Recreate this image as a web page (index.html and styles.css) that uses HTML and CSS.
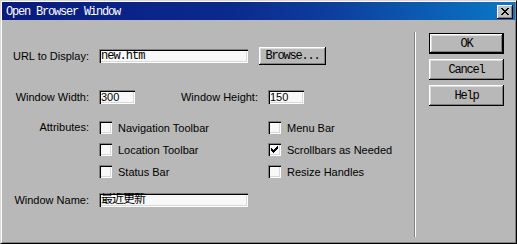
FILE: index.html
```html
<!DOCTYPE html>
<html lang="en">
<head>
    <meta charset="UTF-8">
    <meta name="viewport" content="width=device-width, initial-scale=1.0">
    <title>Open Browser Window</title>
    <link rel="stylesheet" href="styles.css">
</head>
<body>

    <div class="window">
        <div class="titlebar">
            <span class="title">Open Browser Window</span>
            <span class="close-btn">
                <svg width="8" height="7" viewBox="0 0 8 7" shape-rendering="crispEdges">
                    <path d="M0 0h2v1H0zM6 0h2v1H6zM1 1h2v1H1zM5 1h2v1H5zM2 2h4v1H2zM3 3h2v1H3zM2 4h4v1H2zM1 5h2v1H1zM5 5h2v1H5zM0 6h2v1H0zM6 6h2v1H6z" fill="#000"/>
                </svg>
            </span>
        </div>

        <div class="dialog-body">
            <div class="form">
                <div class="row row-url">
                    <span class="label">URL to Display:</span>
                    <div class="field field-long mono">new.htm</div>
                    <button class="btn browse-btn">Browse...</button>
                </div>

                <div class="row row-size">
                    <span class="label">Window Width:</span>
                    <div class="field field-short">300</div>
                    <span class="label label-height">Window Height:</span>
                    <div class="field field-short">150</div>
                </div>

                <div class="row row-attrs">
                    <span class="label">Attributes:</span>
                    <div class="checks">
                        <div class="check"><span class="box"></span>Navigation Toolbar</div>
                        <div class="check"><span class="box"></span>Menu Bar</div>
                        <div class="check"><span class="box"></span>Location Toolbar</div>
                        <div class="check">
                            <span class="box">
                                <svg width="7" height="7" viewBox="0 0 7 7" shape-rendering="crispEdges">
                                    <path d="M6 0h1v1H6zM5 1h2v1H5zM0 2h1v1H0zM4 2h3v1H4zM0 3h2v1H0zM3 3h3v1H3zM0 4h5v1H0zM1 5h3v1H1zM2 6h1v1H2z" fill="#000"/>
                                </svg>
                            </span>Scrollbars as Needed
                        </div>
                        <div class="check"><span class="box"></span>Status Bar</div>
                        <div class="check"><span class="box"></span>Resize Handles</div>
                    </div>
                </div>

                <div class="row row-name">
                    <span class="label">Window Name:</span>
                    <div class="field field-long mono">最近更新</div>
                </div>
            </div>

            <div class="separator"></div>

            <div class="actions">
                <button class="btn action-btn default-btn">OK</button>
                <button class="btn action-btn">Cancel</button>
                <button class="btn action-btn">Help</button>
            </div>
        </div>
    </div>

</body>
</html>
```

FILE: styles.css
```css
body {
    margin: 0;
    background: #b8b8b8;
    font-family: "Liberation Sans", Arial, sans-serif;
    font-size: 11px;
    color: #000;
}
.window {
    width: 517px;
    height: 244px;
    box-sizing: border-box;
    padding: 1px;
    background: #b8b8b8;
    border: 1px solid;
    border-color: #d8d8d8 #000 #000 #d8d8d8;
    box-shadow: inset 1px 1px #fff, inset -1px -1px #808080;
}
.titlebar {
    height: 18px;
    display: flex;
    align-items: center;
    justify-content: space-between;
    background: linear-gradient(to right, #0a1a80 0%, #0b2a8e 45%, #0d3f9e 65%, #0a78c6 100%);
}
.title,
.mono,
.btn {
    font-family: "Liberation Mono", "Noto Sans CJK SC", monospace;
    font-size: 12px;
    letter-spacing: -1.2px;
}
.title {
    color: #fff;
    padding-left: 4px;
    padding-top: 1px;
}
.close-btn {
    width: 16px;
    height: 14px;
    margin: 1px 2px 0 0;
    display: flex;
    align-items: center;
    justify-content: center;
    background: #c0c0c0;
    box-shadow: inset -1px -1px #000, inset 1px 1px #fff, inset -2px -2px #808080;
}
.dialog-body {
    display: flex;
    height: 222px;
}
.form {
    width: 404px;
    padding: 27px 0 0 8px;
}
.row {
    display: flex;
    align-items: center;
}
.row-size { margin-top: 25px; }
.row-attrs {
    margin-top: 17px;
    align-items: flex-start;
}
.row-name { margin-top: 15px; }
.label {
    width: 79px;
    margin-right: 10px;
    text-align: right;
    line-height: 13px;
    white-space: nowrap;
}
.label-height {
    width: 123px;
    margin-right: 10px;
}
.field {
    height: 14px;
    box-sizing: border-box;
    padding: 1px 0 0 2px;
    background: #f8f8f8;
    box-shadow: inset 1px 1px #808080, inset 2px 2px #000, inset -1px -1px #fff, inset -2px -2px #d8d8d8;
    line-height: 12px;
    overflow: hidden;
    white-space: nowrap;
}
.field-long { width: 149px; }
.field-short { width: 36px; }
.mono {
    letter-spacing: -1px;
    line-height: 12px;
}
.checks {
    display: grid;
    grid-template-columns: 169px auto;
    row-gap: 9px;
}
.check {
    display: flex;
    align-items: center;
    height: 13px;
    white-space: nowrap;
}
.box {
    width: 13px;
    height: 13px;
    box-sizing: border-box;
    margin-right: 6px;
    display: flex;
    align-items: center;
    justify-content: center;
    background: #f8f8f8;
    box-shadow: inset 1px 1px #808080, inset 2px 2px #000, inset -1px -1px #fff, inset -2px -2px #d8d8d8;
}
.btn {
    border: none;
    padding: 0;
    margin: 0;
    color: #000;
    background: #b8b8b8;
    box-shadow: inset -1px -1px #000, inset 1px 1px #fff, inset -2px -2px #808080, inset 2px 2px #dcdcdc;
}
.browse-btn {
    width: 67px;
    height: 18px;
    margin-left: 11px;
}
.separator {
    width: 0;
    margin: 12px 0 5px;
    border-left: 1px solid #808080;
    border-right: 1px solid #fff;
}
.actions {
    display: flex;
    flex-direction: column;
    gap: 5px;
    padding: 13px 0 0 13px;
}
.action-btn {
    width: 75px;
    height: 21px;
}
.default-btn {
    border: 1px solid #000;
}
```
